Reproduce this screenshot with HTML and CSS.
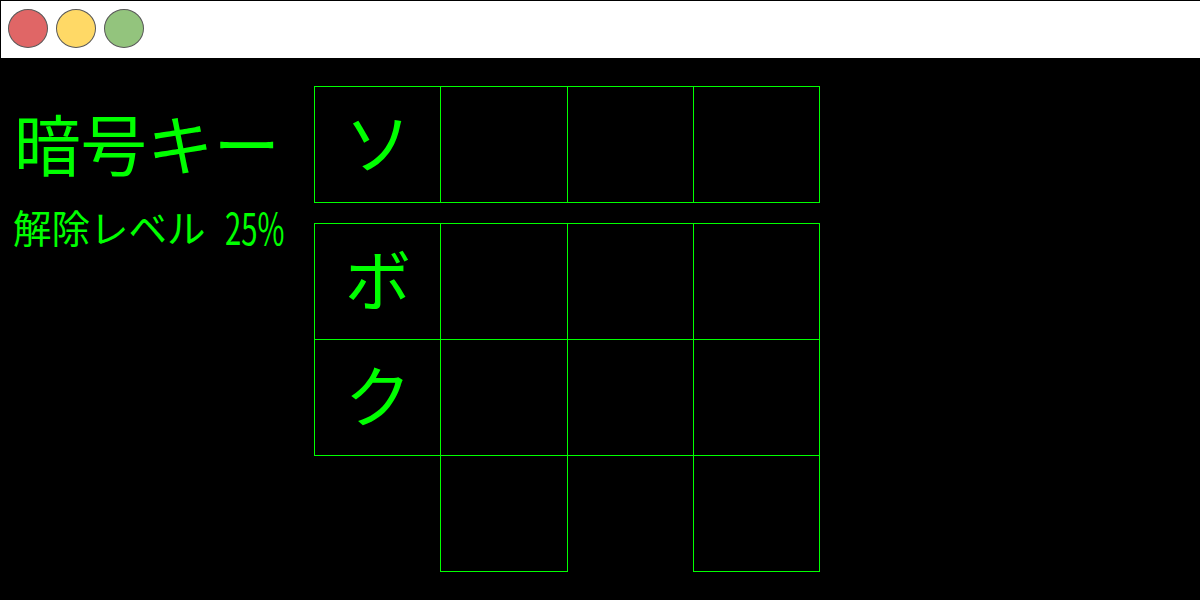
FILE: index.html
```html
<!DOCTYPE html>
<html lang="ja">
<head>
<meta charset="utf-8">
<title>暗号キー</title>
<link rel="stylesheet" href="styles.css">
</head>
<body>
<div class="window">
  <header class="titlebar">
    <span class="dot red"></span>
    <span class="dot yellow"></span>
    <span class="dot green"></span>
  </header>
  <main class="screen">
    <section class="status">
      <h1 class="title">暗号キー</h1>
      <p class="level"><span class="label">解除レベル</span><span class="value">25%</span></p>
    </section>
    <section class="boards">
      <div class="grid">
        <div class="cell">ソ</div><div class="cell"></div><div class="cell"></div><div class="cell"></div>
      </div>
      <div class="grid">
        <div class="cell">ボ</div><div class="cell"></div><div class="cell"></div><div class="cell"></div>
        <div class="cell">ク</div><div class="cell"></div><div class="cell"></div><div class="cell"></div>
        <div class="cell second"></div><div class="cell fourth"></div>
      </div>
    </section>
  </main>
</div>
</body>
</html>
```
FILE: styles.css
```css
* { box-sizing: border-box; }
body {
  margin: 0;
  background: #000;
  color: #0f0;
  font-family: "Noto Sans CJK JP", sans-serif;
}
.window {
  height: 600px;
  padding: 1px 0 0 1px;
  overflow: hidden;
}
.titlebar {
  display: flex;
  gap: 8px;
  height: 57px;
  padding: 8px 7px;
  background: #fff;
}
.dot {
  width: 40px;
  height: 39px;
  border: 1px solid #595959;
  border-radius: 50%;
}
.red { background: #e06666; }
.yellow { background: #ffd966; }
.green { background: #93c47d; }
.screen {
  display: flex;
  padding-top: 28px;
}
.status {
  width: 313px;
  padding: 14px 0 0 13px;
}
.title {
  margin: 0;
  font-size: 66.5px;
  line-height: 84px;
  font-weight: 400;
  white-space: nowrap;
}
.level {
  display: flex;
  margin: 18px 0 0 -1px;
  font-size: 38.5px;
  line-height: 48px;
  white-space: nowrap;
}
.value {
  margin-left: 19px;
  font-size: 43px;
  transform: scaleX(.68);
  transform-origin: left;
}
.boards {
  display: flex;
  flex-direction: column;
  gap: 21px;
}
.grid {
  display: grid;
  grid-template-columns: 126px 127px 126px 126px;
  grid-auto-rows: 116px;
}
.cell {
  display: flex;
  align-items: center;
  justify-content: center;
  margin: 0 -1px -1px 0;
  padding: 0 0 10px 1px;
  border: 1px solid #0f0;
  font-size: 66.5px;
  line-height: 80px;
}
.second { grid-column: 2; }
.fourth { grid-column: 4; }
```
